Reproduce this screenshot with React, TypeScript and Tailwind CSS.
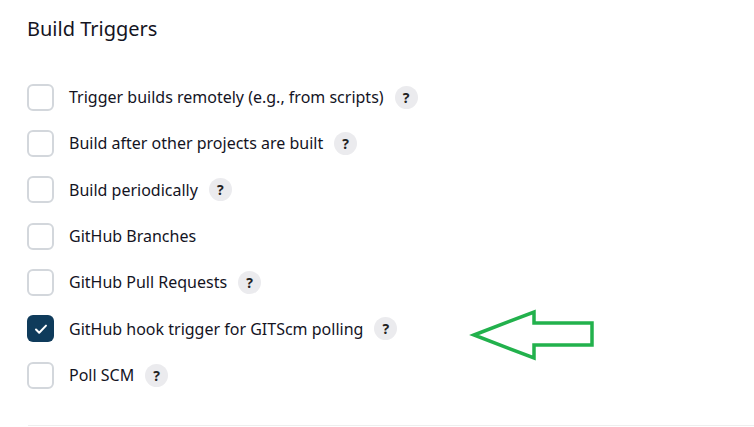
// Build Triggers section, Jenkins job config

const TRIGGERS: { label: string; checked?: boolean; help?: boolean }[] = [
  { label: 'Trigger builds remotely (e.g., from scripts)', help: true },
  { label: 'Build after other projects are built', help: true },
  { label: 'Build periodically', help: true },
  { label: 'GitHub Branches' },
  { label: 'GitHub Pull Requests', help: true },
  { label: 'GitHub hook trigger for GITScm polling', checked: true, help: true },
  { label: 'Poll SCM', help: true },
];

function Checkbox({ checked }: { checked?: boolean }) {
  if (checked) {
    return (
      <span className="flex h-[27px] w-[27px] shrink-0 items-center justify-center rounded-[6px] bg-[#0f3b5b]">
        <svg width="16" height="16" viewBox="0 0 16 16" fill="none">
          <path d="M3 8.5l3.2 3.2L13 4.6" stroke="#fff" strokeWidth="2" strokeLinecap="round" strokeLinejoin="round" />
        </svg>
      </span>
    );
  }
  return <span className="h-[27px] w-[27px] shrink-0 rounded-[6px] border-2 border-[#d3d7dc] bg-white" />;
}

function HelpBtn() {
  return (
    <span className="ml-[11px] flex h-[23px] w-[23px] items-center justify-center rounded-full bg-[#ebebee] text-[14px] font-bold text-[#222]">
      ?
    </span>
  );
}

export default function App() {
  return (
    <div className="relative h-[427px] w-[754px] overflow-hidden bg-white font-['Noto_Sans',sans-serif] text-[#14141f]">
      <div className="pl-[27px]">
        <h2 className="pt-[15px] text-[20px] leading-[28px] font-normal">Build Triggers</h2>
        <div className="mt-[31px] flex flex-col">
          {TRIGGERS.map((t) => (
            <div key={t.label} className="flex h-[46.33px] items-center">
              <Checkbox checked={t.checked} />
              <span className="ml-[15px] text-[16px]">{t.label}</span>
              {t.help && <HelpBtn />}
            </div>
          ))}
        </div>
        <div className="mt-[27px] ml-px border-b border-[#eeeeee]" />
      </div>

      {/* annotation arrow */}
      <svg className="absolute left-[469px] top-[308px]" width="130" height="54" viewBox="0 0 130 54">
        <path
          d="M5 27 L65 4 L65 15 L123 15 L123 37 L65 37 L65 50 Z"
          fill="none"
          stroke="#22b14c"
          strokeWidth="3.5"
          strokeLinejoin="miter"
        />
      </svg>
    </div>
  );
}
